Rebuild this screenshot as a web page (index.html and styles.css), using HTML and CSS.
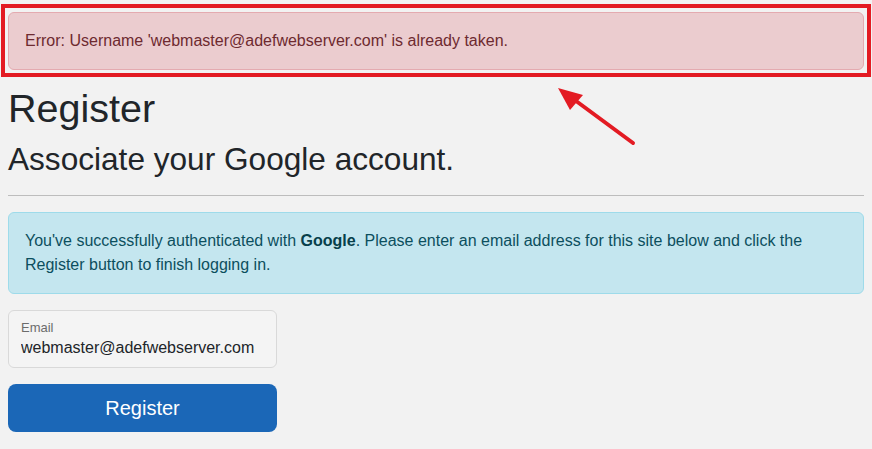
FILE: index.html
```html
<!DOCTYPE html>
<html lang="en">
<head>
    <meta charset="UTF-8">
    <meta name="viewport" content="width=device-width, initial-scale=1.0">
    <title>Register</title>
    <link rel="stylesheet" href="styles.css">
</head>
<body>
    <div class="page">
        <div class="alert alert-danger">Error: Username 'webmaster@adefwebserver.com' is already taken.</div>

        <h1>Register</h1>
        <h2>Associate your Google account.</h2>
        <hr>

        <div class="alert alert-info">You've successfully authenticated with <strong>Google</strong>. Please enter an email address for this site below and click the Register button to finish logging in.</div>

        <form class="register-form" onsubmit="return false;">
            <div class="form-floating">
                <label for="email">Email</label>
                <input type="email" id="email" value="webmaster@adefwebserver.com">
            </div>
            <button type="submit" class="btn-register">Register</button>
        </form>
    </div>

    <!-- annotation -->
    <div class="highlight-box"></div>
    <svg class="highlight-arrow" width="872" height="449" viewBox="0 0 872 449">
        <line x1="633" y1="143" x2="572" y2="98" stroke="#e31b23" stroke-width="4" stroke-linecap="round"/>
        <polygon points="558,88 583,95 570,110" fill="#e31b23"/>
    </svg>
</body>
</html>
```

FILE: styles.css
```css
body {
    font-family: "Liberation Sans", Arial, sans-serif;
    font-size: 16px;
    line-height: 1.5;
    color: #212529;
    background-color: #f2f2f2;
    margin: 0;
    padding: 0;
}
.page {
    padding: 12px 8px 8px 8px;
}
.alert {
    padding: 16px;
    border: 1px solid transparent;
    border-radius: 6px;
}
.alert-danger {
    background-color: #ebcccf;
    border-color: #e4aab0;
    color: #6e2a30;
    margin-bottom: 14px;
}
.alert-info {
    background-color: #c4e6ef;
    border-color: #9edbea;
    color: #0c4f5e;
    margin-bottom: 16px;
}
.alert-info strong {
    color: #073f4b;
}
h1 {
    font-size: 39.5px;
    font-weight: 400;
    line-height: 48px;
    margin: 0 0 8px 0;
}
h2 {
    font-size: 31.6px;
    font-weight: 400;
    line-height: 38px;
    margin: 0 0 8px 0;
}
hr {
    border: none;
    border-top: 1px solid #bdbdbd;
    margin: 17px 0 16px 0;
}
.register-form {
    width: 269px;
}
.form-floating {
    position: relative;
    height: 58px;
    box-sizing: border-box;
    border: 1px solid #d9d9d9;
    border-radius: 6px;
    background-color: #f4f4f4;
    padding: 8px 12px 0 12px;
    margin-bottom: 16px;
}
.form-floating label {
    display: block;
    font-size: 13px;
    line-height: 18px;
    color: #6c6c6c;
}
.form-floating input {
    display: block;
    width: 100%;
    border: none;
    background: transparent;
    padding: 0;
    font-family: inherit;
    font-size: 16px;
    line-height: 22px;
    color: #212529;
    outline: none;
}
.btn-register {
    display: block;
    width: 100%;
    height: 48px;
    border: none;
    border-radius: 8px;
    background-color: #1b67b7;
    color: white;
    font-family: inherit;
    font-size: 20px;
    cursor: pointer;
}
.btn-register:hover {
    background-color: #175a9f;
}
.highlight-box {
    position: absolute;
    left: 1px;
    top: 4px;
    width: 862px;
    height: 65px;
    border: 4px solid #e31b23;
}
.highlight-arrow {
    position: absolute;
    left: 0;
    top: 0;
    pointer-events: none;
}
```
